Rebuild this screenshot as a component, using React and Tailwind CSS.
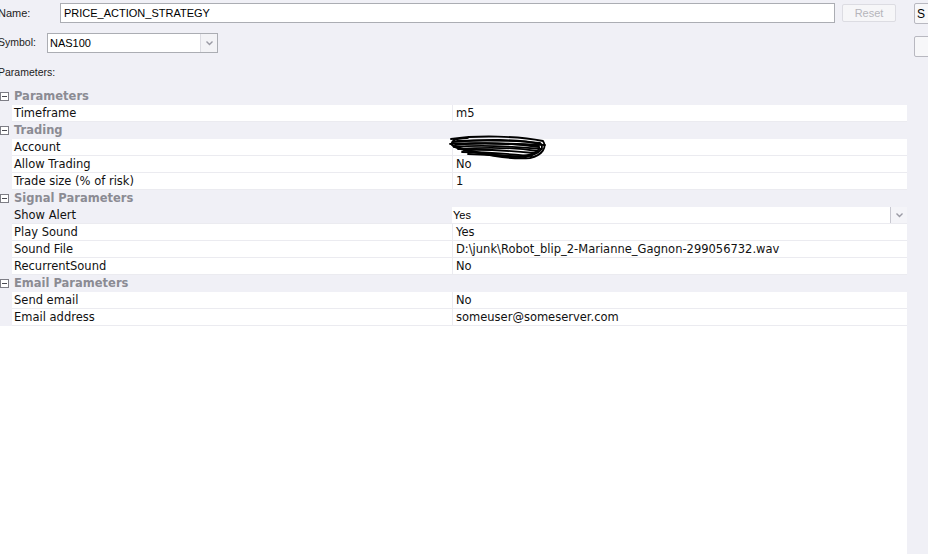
import React from 'react';

const sections = [
  {
    title: 'Parameters',
    rows: [{ name: 'Timeframe', value: 'm5' }],
  },
  {
    title: 'Trading',
    rows: [
      { name: 'Account', value: '', hidden: true },
      { name: 'Allow Trading', value: 'No' },
      { name: 'Trade size (% of risk)', value: '1' },
    ],
  },
  {
    title: 'Signal Parameters',
    rows: [
      { name: 'Show Alert', value: 'Yes', editing: true },
      { name: 'Play Sound', value: 'Yes' },
      { name: 'Sound File', value: 'D:\\junk\\Robot_blip_2-Marianne_Gagnon-299056732.wav' },
      { name: 'RecurrentSound', value: 'No' },
    ],
  },
  {
    title: 'Email Parameters',
    rows: [
      { name: 'Send email', value: 'No' },
      { name: 'Email address', value: 'someuser@someserver.com' },
    ],
  },
];

const Chevron = () => (
  <svg width="7" height="5" viewBox="0 0 7 5">
    <path d="M0.5 0.5 L3.5 3.5 L6.5 0.5" fill="none" stroke="#9a9aa4" strokeWidth="1.4" />
  </svg>
);

// black marker scribble hiding the account number
const Scribble = () => (
  <svg width="100" height="26" viewBox="0 0 100 26" className="absolute z-10 left-[-8px] top-[-7px]">
    <g fill="none" stroke="#000" strokeWidth="1.8" strokeLinecap="round">
      <path d="M3 4 C30 0 70 1 95 6 C99 12 95 20 82 23 C62 25 30 19 6 12 C1 8 4 3 20 3" />
      <path d="M5 7 C35 4 70 4 93 9 C97 15 88 21 72 22 C46 21 18 16 4 10" />
      <path d="M7 10 C30 7 60 8 91 12 C93 18 76 23 55 21 C35 19 15 16 7 12" />
      <path d="M9 6 C40 5 75 6 92 8 M10 14 C40 12 70 13 89 16 M14 17 C40 17 60 19 84 21" />
      <path d="M2 9 C20 7 50 8 97 10 M6 12 C30 10 60 11 94 14" />
      <path d="M12 9 C40 8 70 9 91 11 M16 15 C40 14 65 16 86 18 M20 19 C45 20 65 21 78 22" />
    </g>
  </svg>
);

const Category = ({ title }) => (
  <div className="h-[17px] flex items-center bg-[#f0f0f6]">
    <div className="w-[9px] h-[9px] border border-[#7e7e86] bg-white flex items-center justify-center">
      <div className="w-[5px] h-px bg-[#4a4a52]" />
    </div>
    <span className="ml-[5px] font-bold text-[11.5px] text-[#8b8b93] leading-none">{title}</span>
  </div>
);

const Row = ({ row }) => (
  <div className="h-[17px] flex">
    <div className="w-[12px] bg-[#f0f0f6]" />
    <div
      className={`w-[440px] flex items-center pt-[2px] pl-[2px] border-b border-[#ebebf0] text-[11.5px] text-[#111] ${
        row.editing ? 'bg-[#f0f0f6]' : 'bg-white'
      }`}
    >
      {row.name}
    </div>
    {row.editing ? (
      <div className="flex-1 flex bg-white border-b border-[#ebebf0]">
        <div className="flex-1 flex items-center pt-[1px] pl-[1px] text-[11px] text-black font-['Liberation_Sans',Arial,sans-serif]">
          {row.value}
        </div>
        <div className="w-[17px] flex items-center justify-center bg-[#f4f4f8] border-l border-[#c8c8d0]">
          <Chevron />
        </div>
      </div>
    ) : (
      <div className="flex-1 flex items-center pt-[2px] pl-[3px] border-l border-[#ebebf0] border-b bg-white text-[11.5px] text-[#111]">
        {row.hidden ? (
          <div className="relative w-[90px] h-[12px]">
            <Scribble />
          </div>
        ) : (
          row.value
        )}
      </div>
    )}
  </div>
);

export default function App() {
  return (
    <div className="w-[928px] h-[554px] overflow-hidden flex bg-[#f0f0f6] font-['DejaVu_Sans',Verdana,sans-serif]">
      <div className="w-[907px] flex flex-col">
        <div className="font-['Liberation_Sans',Arial,sans-serif] text-[11px] text-[#222]">
          <div className="flex items-center h-[20px] mt-[3px]">
            <span className="w-[62px] -ml-[2px] shrink-0">Name:</span>
            <div className="flex-1 h-[20px] bg-white border border-[#abadb3] flex items-center pl-[3px] text-[11px] text-black">
              PRICE_ACTION_STRATEGY
            </div>
            <div className="w-[54px] h-[18px] ml-[7px] mr-[11px] border border-[#dcdce2] bg-[#f6f6f8] rounded-[2px] flex items-center justify-center text-[#b5b5bb]">
              Reset
            </div>
          </div>
          <div className="flex items-center h-[20px] mt-[10px]">
            <span className="w-[49px] -ml-[2px] shrink-0 text-[10.5px]">Symbol:</span>
            <div className="w-[171px] h-[20px] bg-white border border-[#abadb3] flex">
              <div className="flex-1 flex items-center pl-[2px] text-[11px] text-black">NAS100</div>
              <div className="w-[17px] flex items-center justify-center bg-[#f3f3f6] border-l border-[#dcdce2]">
                <Chevron />
              </div>
            </div>
          </div>
          <div className="mt-[13px] -ml-[2px] h-[12px] leading-[12px] text-[10.5px]">Parameters:</div>
        </div>
        <div className="mt-[10px] flex-1 bg-white">
          {sections.map((s) => (
            <div key={s.title}>
              <Category title={s.title} />
              {s.rows.map((r) => (
                <Row key={r.name} row={r} />
              ))}
            </div>
          ))}
        </div>
      </div>
      <div className="w-[21px] shrink-0">
        <div className="w-[40px] ml-[7px] mt-[3px] flex flex-col gap-[12px] font-['Liberation_Sans',Arial,sans-serif] text-[12px]">
          <div className="h-[21px] border border-[#b8b8c0] bg-[#f7f7f9] rounded-[2px] pl-[2px] flex items-center text-black">
            S
          </div>
          <div className="h-[21px] border border-[#b8b8c0] bg-[#f7f7f9] rounded-[2px]" />
        </div>
      </div>
    </div>
  );
}
